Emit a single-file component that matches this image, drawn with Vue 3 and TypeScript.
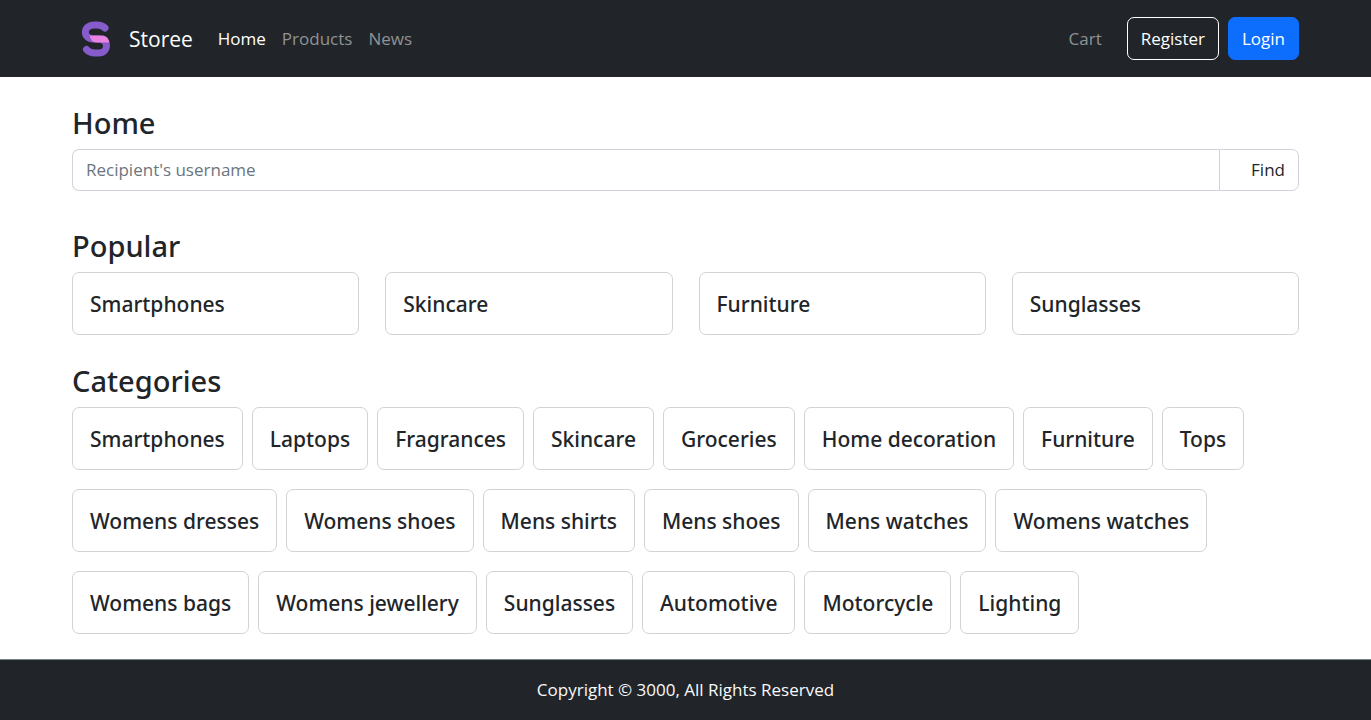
<script setup lang="ts">
import { ref } from 'vue'

interface NavLink {
  label: string
  active: boolean
}

const links: NavLink[] = [
  { label: 'Home', active: true },
  { label: 'Products', active: false },
  { label: 'News', active: false },
]

const popular: string[] = ['Smartphones', 'Skincare', 'Furniture', 'Sunglasses']

const categories: string[] = [
  'Smartphones', 'Laptops', 'Fragrances', 'Skincare', 'Groceries', 'Home decoration',
  'Furniture', 'Tops', 'Womens dresses', 'Womens shoes', 'Mens shirts', 'Mens shoes',
  'Mens watches', 'Womens watches', 'Womens bags', 'Womens jewellery', 'Sunglasses',
  'Automotive', 'Motorcycle', 'Lighting',
]

const query = ref('')
</script>

<template>
  <div class="page">
    <header class="navbar">
      <div class="container bar">
        <a class="brand" href="#">
          <svg class="logo" viewBox="0 0 48 48" aria-hidden="true">
            <path
              d="M33 13Q30 10 25 10H22.500C10.500 10 10.500 24 21.500 24H26C37.500 24 37 38 26.500 38H23Q17.500 38 14.500 34.500"
              fill="none" stroke="#865bcb" stroke-width="7" stroke-linecap="round" />
            <path d="M17.500 20.500H31Q36 21 37.500 27.500H24Q19 27 17.500 20.500Z" fill="#e884e0" />
          </svg>
          <span>Storee</span>
        </a>
        <nav class="links">
          <a v-for="link in links" :key="link.label" href="#" :class="{ active: link.active }">{{ link.label }}</a>
        </nav>
        <div class="actions">
          <a class="cart" href="#">Cart</a>
          <button class="btn outline" type="button">Register</button>
          <button class="btn primary" type="button">Login</button>
        </div>
      </div>
    </header>

    <main class="container content">
      <section>
        <h2>Home</h2>
        <form class="search" @submit.prevent>
          <input v-model="query" type="text" placeholder="Recipient's username" aria-label="Recipient's username">
          <button type="submit">Find</button>
        </form>
      </section>

      <section>
        <h2>Popular</h2>
        <div class="popular">
          <a v-for="name in popular" :key="name" class="card" href="#">{{ name }}</a>
        </div>
      </section>

      <section>
        <h2>Categories</h2>
        <div class="categories">
          <a v-for="name in categories" :key="name" class="card" href="#">{{ name }}</a>
        </div>
      </section>
    </main>

    <footer class="footer">Copyright © 3000, All Rights Reserved</footer>
  </div>
</template>

<style>
body {
  margin: 0;
  background: #fff;
}
</style>

<style scoped>
.page {
  display: flex;
  flex-direction: column;
  min-height: 100vh;
  font-family: "Segoe UI", "Open Sans", "Noto Sans", sans-serif;
  font-size: 17px;
  line-height: 26px;
  color: #212529;
}

.page * {
  box-sizing: border-box;
}

.container {
  width: calc(100% - 48px);
  max-width: 1227px;
  margin: 0 auto;
}

a {
  color: inherit;
  text-decoration: none;
}

button,
input {
  font: inherit;
}

.navbar {
  background: #212529;
  color: #fff;
}

.bar {
  display: flex;
  align-items: center;
  height: 77px;
}

.brand {
  display: flex;
  align-items: center;
  gap: 9px;
  margin-right: 25px;
  font-size: 21px;
}

.logo {
  width: 48px;
  height: 48px;
}

.links {
  display: flex;
  gap: 16px;
  color: #909294;
}

.links .active {
  color: #fff;
}

.actions {
  display: flex;
  align-items: center;
  gap: 9px;
  margin-left: auto;
}

.cart {
  margin-right: 16px;
  color: #909294;
}

.btn {
  height: 43px;
  padding: 0 13px;
  border: 1px solid #fff;
  border-radius: 7px;
  background: transparent;
  color: #fff;
}

.btn.primary {
  border-color: #0d6efd;
  background: #0d6efd;
}

.content {
  display: flex;
  flex-direction: column;
  gap: 27px;
  flex: 1;
  padding: 27px 0 25px;
}

h2 {
  margin: 0 0 7px;
  font-family: "Segoe UI", "Noto Sans", sans-serif;
  font-size: 29px;
  font-weight: 500;
  line-height: 38px;
}

.search {
  display: flex;
  height: 42px;
  margin-bottom: 9px;
}

.search input {
  flex: 1;
  min-width: 0;
  padding: 0 13px;
  border: 1px solid #ced4da;
  border-right: 0;
  border-radius: 7px 0 0 7px;
  color: #212529;
}

.search input::placeholder {
  color: #6c757d;
  opacity: 1;
}

.search button {
  width: 80px;
  padding: 0 13px;
  border: 1px solid #ced4da;
  border-radius: 0 7px 7px 0;
  background: #fff;
  color: #212529;
  text-align: right;
}

.popular {
  display: grid;
  grid-template-columns: repeat(4, 1fr);
  gap: 26px;
}

.categories {
  display: flex;
  flex-wrap: wrap;
  gap: 19px 9px;
}

.card {
  padding: 18px 17px 16px;
  border: 1px solid #d2d3d4;
  border-radius: 7px;
  font-family: "Segoe UI", "Noto Sans", sans-serif;
  font-size: 21px;
  font-weight: 500;
  line-height: 27px;
}

.footer {
  padding: 17px;
  border-top: 1px solid #7a8581;
  background: #212529;
  color: #f8f9fa;
  text-align: center;
}
</style>
